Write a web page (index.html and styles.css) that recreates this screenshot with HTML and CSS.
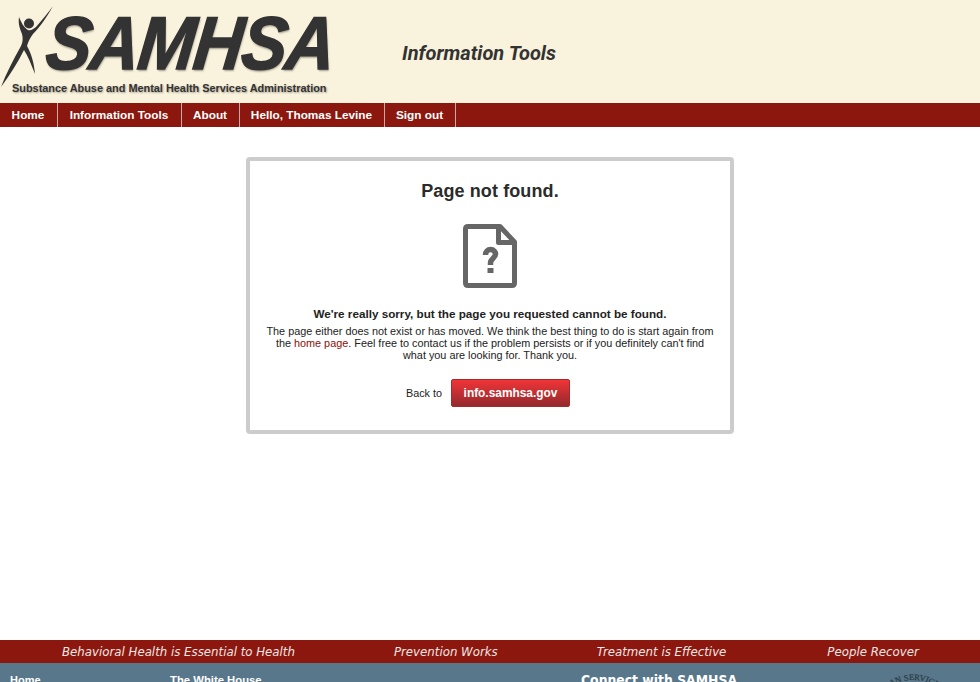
FILE: index.html
```html
<!DOCTYPE html>
<html lang="en">
<head>
<meta charset="utf-8">
<title>Page not found</title>
<link rel="stylesheet" href="styles.css">
</head>
<body>
<header class="masthead">
  <div class="logo">
    <svg class="logo-figure" width="60" height="90" viewBox="0 0 60 90" aria-hidden="true">
      <circle cx="29" cy="23.500" r="5" fill="#333"/>
      <path fill="#333" d="M53 6 C47 17 40 27 33 34 C30 38 28 42 27 46 C31 53 34 62 35 74 C31 64 28 56 24 50 C18 62 10 75 1 87 C6 74 13 60 21 46 C23 42 23 38 22 34 C20 29 18 24 19 17 C21 22 24 28 28 30 C31 31 33 29 36 27 C42 20 48 13 53 6 Z"/>
    </svg>
    <div class="logo-text">
      <div class="logo-name">SAMHSA</div>
      <div class="logo-sub">Substance Abuse and Mental Health Services Administration</div>
    </div>
  </div>
  <div class="site-title">Information Tools</div>
</header>
<nav class="nav">
  <a href="#">Home</a>
  <a href="#">Information Tools</a>
  <a href="#">About</a>
  <a href="#">Hello, Thomas Levine</a>
  <a href="#">Sign out</a>
</nav>
<main class="content">
  <section class="card">
    <h1>Page not found.</h1>
    <svg class="doc-icon" width="54" height="64" viewBox="0 0 54 64" aria-hidden="true">
      <path class="doc-line" d="M5 2.500 H37 L51.500 18 V59 Q51.500 61.500 49 61.500 H5 Q2.500 61.500 2.500 59 V5 Q2.500 2.500 5 2.500 Z"/>
      <path class="doc-line" d="M35.500 2.500 V18.500 H51.500"/>
      <path class="doc-line doc-q" d="M22.500 31 C22.500 27.500 25 25.500 27.500 25.500 C31 25.500 32.500 28 32.500 30 C32.500 34 27.500 34.500 27.500 39 V41"/>
      <rect class="doc-dot" x="24.500" y="44" width="6" height="5"/>
    </svg>
    <h2>We're really sorry, but the page you requested cannot be found.</h2>
    <p>The page either does not exist or has moved. We think the best thing to do is start again from the <a href="#">home page</a>. Feel free to contact us if the problem persists or if you definitely can't find what you are looking for. Thank you.</p>
    <div class="back">
      <span>Back to</span>
      <a class="btn" href="#">info.samhsa.gov</a>
    </div>
  </section>
</main>
<div class="tagline">
  <span class="t1">Behavioral Health is Essential to Health</span>
  <span class="t2">Prevention Works</span>
  <span class="t3">Treatment is Effective</span>
  <span class="t4">People Recover</span>
</div>
<footer class="footer">
  <div class="f-col f-home">Home</div>
  <div class="f-col f-wh">The White House</div>
  <div class="f-col f-connect">Connect with SAMHSA</div>
  <svg class="seal" width="70" height="40" viewBox="0 0 70 40" aria-hidden="true">
    <defs><path id="arc" d="M-6 52 A41 41 0 0 1 76 52"/></defs>
    <text class="seal-text"><textPath href="#arc" startOffset="95" text-anchor="end">HUMAN SERVICES</textPath></text>
  </svg>
</footer>
</body>
</html>
```

FILE: styles.css
```css
* { box-sizing: border-box; }
html, body { margin: 0; height: 682px; overflow: hidden; }
body { font-family: "Liberation Sans", Arial, sans-serif; color: #222; background: #fff; }

.masthead { height: 103px; background: #f9f2dc; display: flex; }
.logo { width: 402px; position: relative; display: flex; }
.logo-figure { position: absolute; left: 0; top: 0; }
.logo-text { margin-left: 12px; }
.logo-name {
  font: italic 700 75px/1 "Liberation Sans", sans-serif;
  color: #333;
  text-shadow: 1px 2px 2px rgba(0,0,0,.35);
  margin: 6px 0 0 31px;
  height: 71px;
  letter-spacing: -1.500px;
  -webkit-text-stroke: 1.500px #333;
  transform: scaleX(.91) skewX(-7deg);
  transform-origin: 0 100%;
}
.logo-sub {
  font-size: 10.900px;
  font-weight: 700;
  line-height: 14px;
  margin-top: 4px;
  color: #333;
  white-space: nowrap;
  text-shadow: 1px 1px 2px rgba(0,0,0,.35);
}
.site-title {
  font: italic 700 20px/1 Roboto, sans-serif;
  color: #333;
  margin-top: 43px;
}

.nav {
  height: 24px;
  background: #8b170e;
  display: grid;
  grid-template-columns: 58px 124px 58px 145px 71px;
}
.nav a {
  color: #fff;
  font-size: 11.800px;
  font-weight: 700;
  line-height: 24px;
  text-align: center;
  text-decoration: none;
  border-right: 1px solid #c9a9a5;
  padding-right: 1px;
  white-space: nowrap;
}

.content { height: 513px; padding-top: 30px; }
.card {
  width: 488px;
  height: 277px;
  margin: 0 auto;
  border: 4px solid #ccc;
  border-radius: 4px;
  padding: 20px 14px 0;
  text-align: center;
}
.card h1 { margin: 0; font-size: 18px; line-height: 21px; font-weight: 700; color: #2b2b2b; letter-spacing: .1px; }
.doc-icon { display: block; margin: 22px auto 0; }
.doc-line { fill: none; stroke: #666; stroke-width: 5; stroke-linejoin: round; }
.doc-q { stroke-width: 5.500; }
.doc-dot { fill: #666; }
.card h2 { margin: 19px 0 0; font-size: 11.700px; line-height: 14px; font-weight: 700; color: #222; }
.card p { margin: 4px 0 0; font-size: 10.850px; line-height: 12px; color: #222; }
.card p a { color: #8b0f0a; text-decoration: none; }
.back {
  margin-top: 18px;
  padding-right: 4px;
  display: flex;
  justify-content: center;
  align-items: center;
  gap: 9px;
  font-size: 10.800px;
  color: #222;
}
.btn {
  display: block;
  width: 119px;
  height: 28px;
  line-height: 26px;
  border-radius: 2px;
  background: linear-gradient(#f13437, #93292d);
  border: 1px solid #a52a2c;
  color: #fff;
  font-size: 11.900px;
  font-weight: 700;
  text-decoration: none;
}

.tagline {
  height: 23px;
  background: #8b170e;
  color: #f1e6e4;
  font: italic 400 13.100px/23px "DejaVu Sans Condensed", "DejaVu Sans", sans-serif;
  display: flex;
  white-space: nowrap;
}
.t1 { margin-left: 62px; }
.t2 { margin-left: 99px; }
.t3 { margin-left: 99px; }
.t4 { margin-left: 101px; }

.footer {
  height: 60px;
  background: #58778a;
  color: #fff;
  position: relative;
  display: flex;
  font-weight: 700;
  font-size: 11px;
}
.f-col { line-height: 14px; padding-top: 10px; white-space: nowrap; }
.f-home { width: 170px; padding-left: 10px; }
.f-wh { width: 411px; font-size: 11.300px; }
.f-connect { font: 700 13.800px/16px "DejaVu Sans Condensed", "DejaVu Sans", sans-serif; padding-top: 9px; }
.seal { position: absolute; left: 878px; top: 6px; overflow: visible; }
.seal-text { font: 400 8.500px "Liberation Serif", serif; fill: #2b3a44; stroke: #2b3a44; stroke-width: .2px; }
```
